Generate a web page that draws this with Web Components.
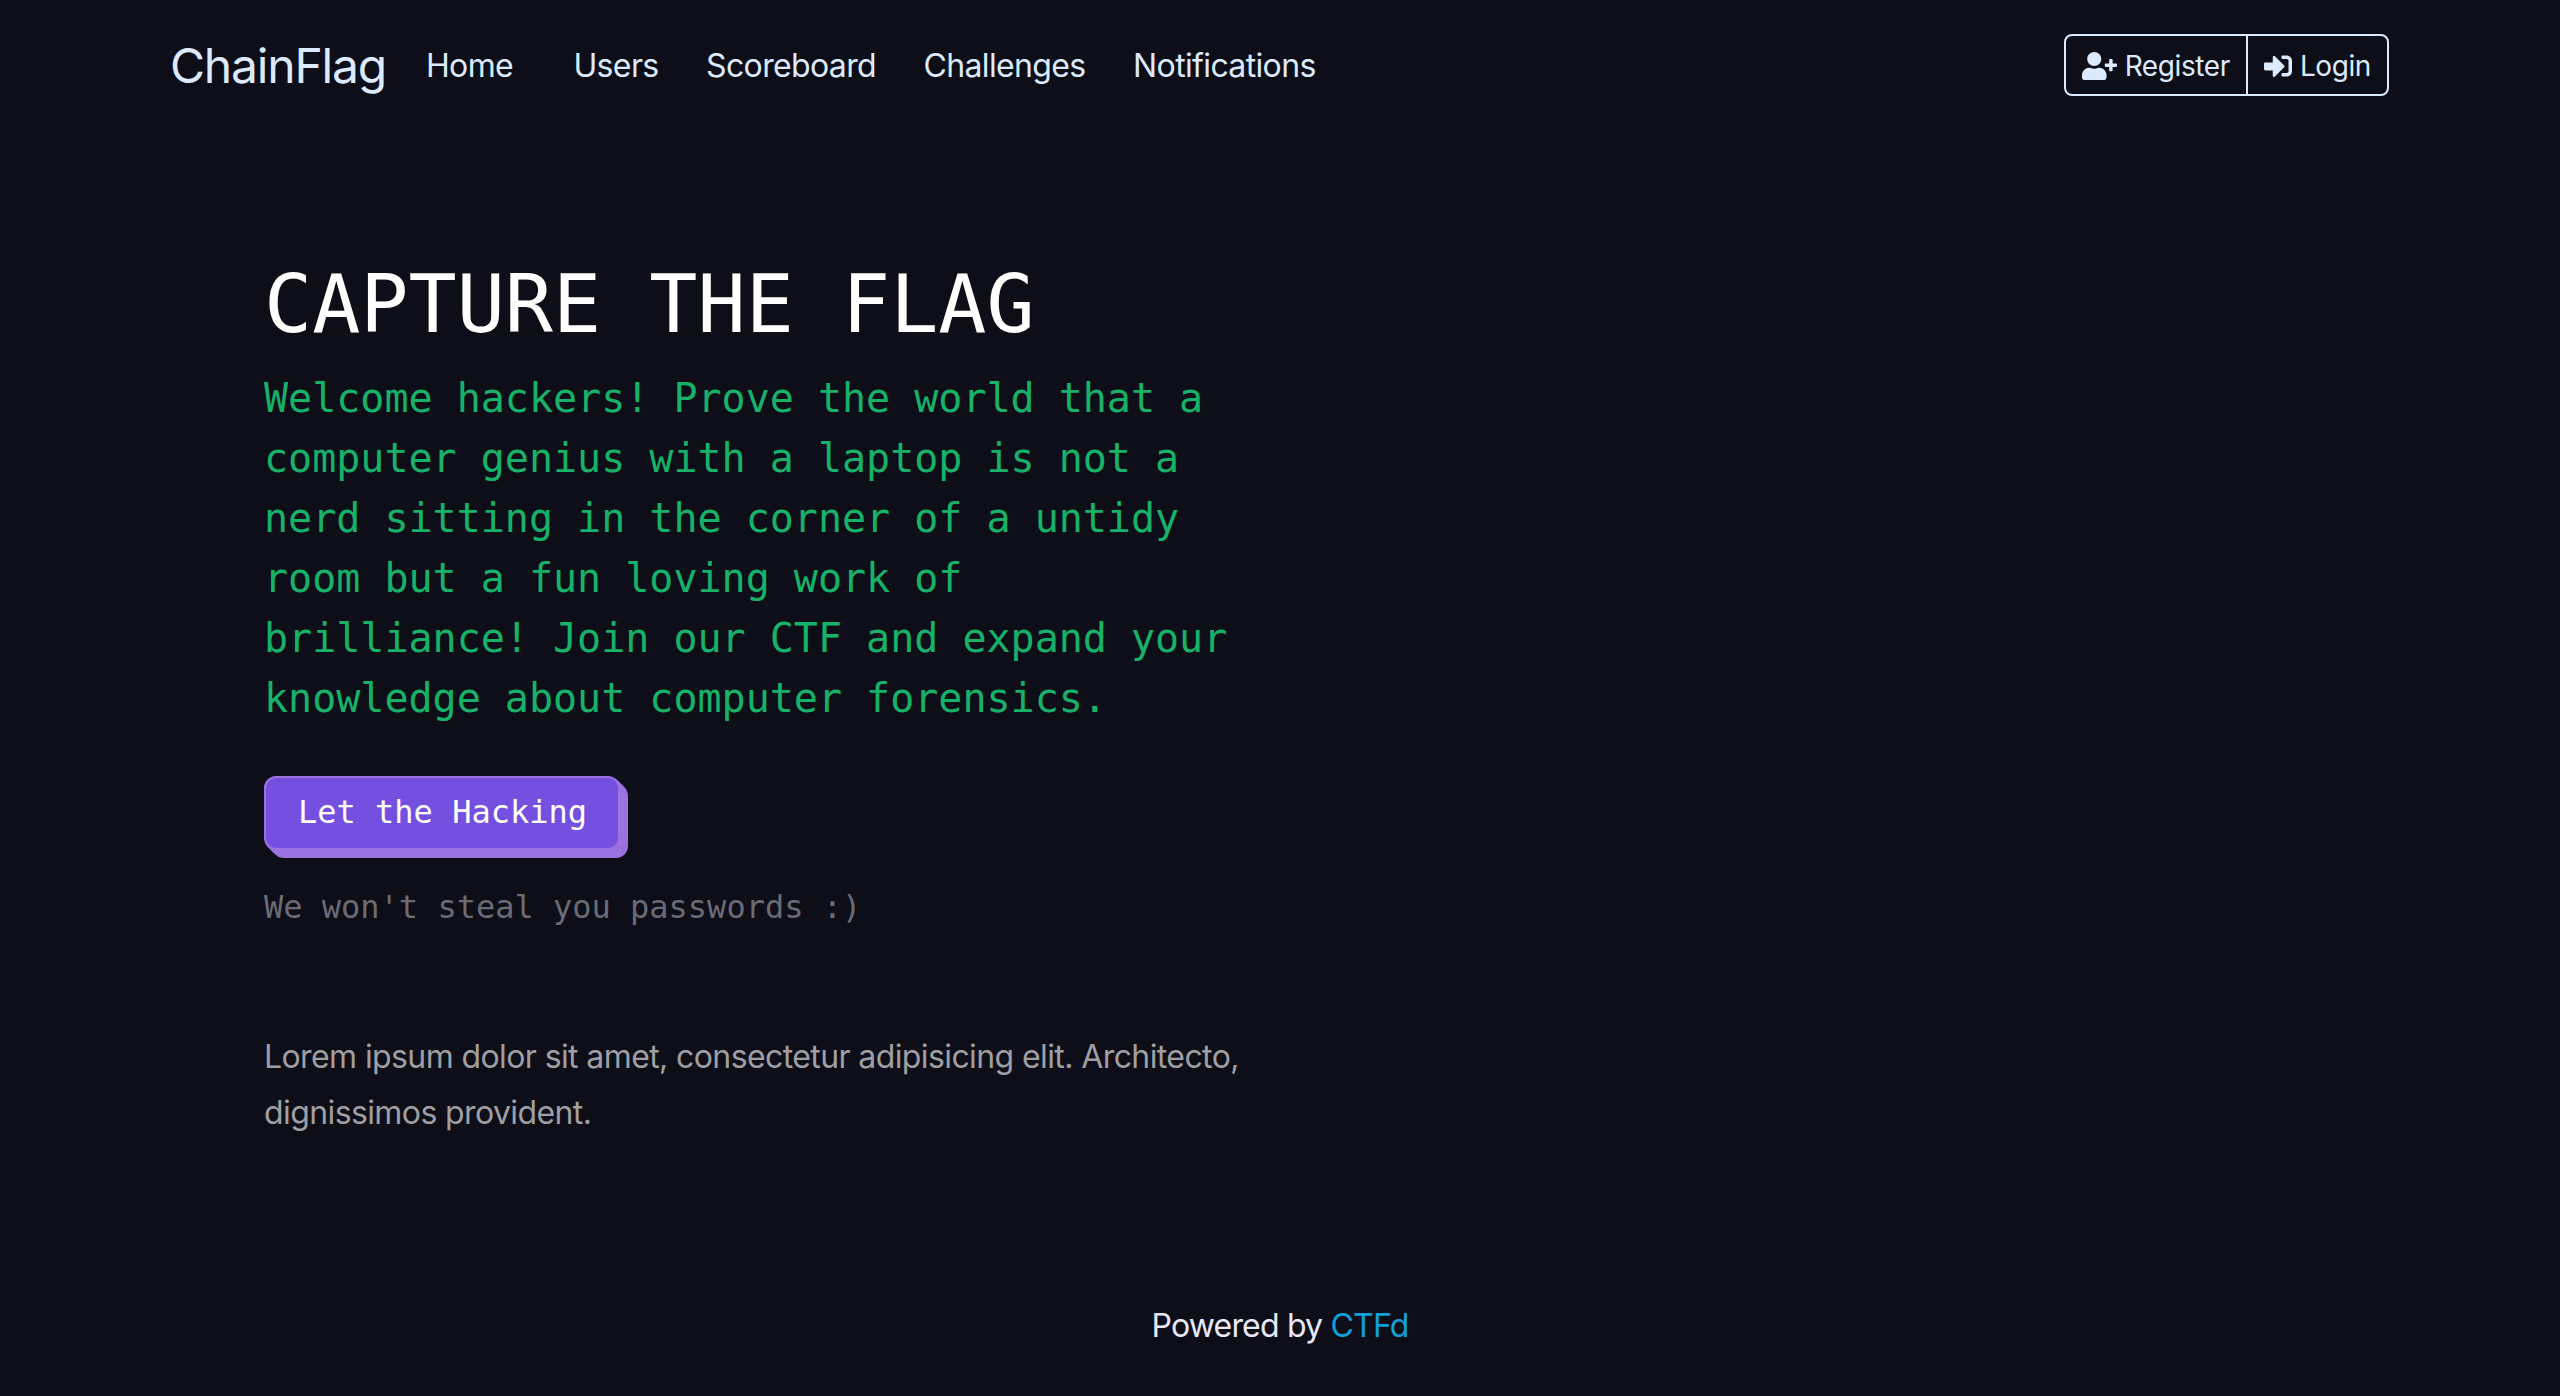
<!DOCTYPE html>
<html lang="en">
<head>
<meta charset="utf-8">
<title>ChainFlag</title>
<style>
    html, body { height: 100%; }
    body {
        margin: 0;
        background-color: #0d0e17;
        color: #dbeafe;
        font-family: Inter, "Liberation Sans", sans-serif;
        font-size: 32px;
        letter-spacing: -0.02em;
        display: flex;
        flex-direction: column;
    }
    hero-section { flex: 1; }
</style>
</head>
<body>
<site-nav brand="ChainFlag">
    <nav-link style="width:100px">Home</nav-link>
    <nav-link>Users</nav-link>
    <nav-link>Scoreboard</nav-link>
    <nav-link>Challenges</nav-link>
    <nav-link>Notifications</nav-link>
    <auth-buttons slot="right"></auth-buttons>
</site-nav>
<hero-section>
    <span slot="title">CAPTURE THE FLAG</span>
    <span slot="tagline">Welcome hackers! Prove the world that a computer genius with a laptop is not a nerd sitting in the corner of a untidy room but a fun loving work of brilliance! Join our CTF and expand your knowledge about computer forensics.</span>
    <hack-button slot="action">Let the Hacking</hack-button>
    <span slot="note">We won't steal you passwords :)</span>
    <span slot="text">Lorem ipsum dolor sit amet, consectetur adipisicing elit. Architecto, dignissimos provident.</span>
</hero-section>
<site-footer></site-footer>

<script>
class SiteNav extends HTMLElement {
    constructor() {
        super();
        this.attachShadow({ mode: 'open' });
    }

    connectedCallback() {
        this.shadowRoot.innerHTML = `
            <style>
                :host {
                    display: flex;
                    align-items: center;
                    height: 130px;
                    padding: 0 171px 0 170px;
                }
                .brand {
                    font-size: 48px;
                    letter-spacing: -0.025em;
                    margin-right: 40px;
                }
                .links {
                    display: flex;
                    flex: 1;
                }
            </style>
            <span class="brand">${this.getAttribute('brand')}</span>
            <div class="links"><slot></slot></div>
            <slot name="right"></slot>
        `;
    }
}

class NavLink extends HTMLElement {
    constructor() {
        super();
        this.attachShadow({ mode: 'open' });
        this.shadowRoot.innerHTML = `
            <style>
                :host {
                    display: block;
                    margin-right: 47.5px;
                    white-space: nowrap;
                }
            </style>
            <slot></slot>
        `;
    }
}

class AuthButtons extends HTMLElement {
    constructor() {
        super();
        this.attachShadow({ mode: 'open' });
        this.shadowRoot.innerHTML = `
            <style>
                :host {
                    display: flex;
                    height: 62px;
                    box-sizing: border-box;
                    border: 2px solid #dbeafe;
                    border-radius: 8px;
                    font-size: 28px;
                    letter-spacing: -0.4px;
                }
                a {
                    display: flex;
                    align-items: center;
                    gap: 8px;
                    padding: 2px 16px 0;
                }
                a:first-child { padding-left: 17px; }
                a + a { border-left: 2px solid #dbeafe; }
                svg { height: 28px; fill: currentColor; }
            </style>
            <a>
                <svg viewBox="0 0 640 512"><path d="M624 208h-64v-64c0-8.8-7.2-16-16-16h-32c-8.8 0-16 7.2-16 16v64h-64c-8.8 0-16 7.2-16 16v32c0 8.8 7.2 16 16 16h64v64c0 8.8 7.2 16 16 16h32c8.8 0 16-7.2 16-16v-64h64c8.8 0 16-7.2 16-16v-32c0-8.8-7.2-16-16-16zm-400 48c70.7 0 128-57.3 128-128S294.7 0 224 0 96 57.3 96 128s57.3 128 128 128zm89.6 32h-16.7c-22.2 10.2-46.9 16-72.9 16s-50.6-5.8-72.9-16h-16.7C60.2 288 0 348.2 0 422.4V464c0 26.5 21.5 48 48 48h352c26.5 0 48-21.5 48-48v-41.6c0-74.2-60.2-134.4-134.4-134.4z"/></svg>
                Register
            </a>
            <a>
                <svg viewBox="0 0 512 512"><path d="M416 448h-84c-6.6 0-12-5.4-12-12v-40c0-6.6 5.4-12 12-12h84c17.7 0 32-14.3 32-32V160c0-17.7-14.3-32-32-32h-84c-6.6 0-12-5.4-12-12V76c0-6.6 5.4-12 12-12h84c53 0 96 43 96 96v192c0 53-43 96-96 96zm-47-201L201 79c-15-15-41-4.5-41 17v96H24c-13.3 0-24 10.7-24 24v96c0 13.3 10.7 24 24 24h136v96c0 21.5 26 32 41 17l168-168c9.3-9.4 9.3-24.6 0-34z"/></svg>
                Login
            </a>
        `;
    }
}

class HeroSection extends HTMLElement {
    constructor() {
        super();
        this.attachShadow({ mode: 'open' });
        this.shadowRoot.innerHTML = `
            <style>
                :host {
                    display: block;
                    padding: 127px 0 0 264px;
                    font-family: "DejaVu Sans Mono", "Liberation Mono", monospace;
                    letter-spacing: 0;
                }
                h1 {
                    margin: 0;
                    width: 1000px;
                    font-size: 80px;
                    font-weight: 400;
                    line-height: 96px;
                    color: #fff;
                }
                p { margin: 0; }
                .tagline {
                    width: 970px;
                    margin-top: 15px;
                    font-size: 40px;
                    line-height: 60px;
                    color: #17b26a;
                }
                .action {
                    margin-top: 48px;
                    line-height: 0;
                }
                .note {
                    margin-top: 33px;
                    line-height: 48px;
                    color: #6b6b75;
                }
                .text {
                    width: 1000px;
                    margin-top: 98px;
                    font-family: Inter, "Liberation Sans", sans-serif;
                    letter-spacing: -0.6px;
                    line-height: 56px;
                    color: #9f9fa3;
                }
            </style>
            <h1><slot name="title"></slot></h1>
            <p class="tagline"><slot name="tagline"></slot></p>
            <div class="action"><slot name="action"></slot></div>
            <p class="note"><slot name="note"></slot></p>
            <p class="text"><slot name="text"></slot></p>
        `;
    }
}

class HackButton extends HTMLElement {
    constructor() {
        super();
        this.attachShadow({ mode: 'open' });
        this.shadowRoot.innerHTML = `
            <style>
                :host {
                    display: inline-block;
                    padding: 10px 31px 12px 32px;
                    background-color: #7450e0;
                    border: 2px solid #9b72e0;
                    border-radius: 12px;
                    box-shadow: 1px 1px 0 #9b72e0, 2px 2px 0 #9b72e0, 3px 3px 0 #9b72e0, 4px 4px 0 #9b72e0,
                        5px 5px 0 #9b72e0, 6px 6px 0 #9b72e0, 7px 7px 0 #9b72e0, 8px 8px 0 #9b72e0;
                    color: #fff;
                    line-height: 48px;
                }
            </style>
            <slot></slot>
        `;
    }
}

class SiteFooter extends HTMLElement {
    constructor() {
        super();
        this.attachShadow({ mode: 'open' });
        this.shadowRoot.innerHTML = `
            <style>
                :host {
                    display: block;
                    text-align: center;
                    padding-bottom: 46px;
                    line-height: 48px;
                    letter-spacing: -0.8px;
                    color: #e8e8fa;
                }
                a { color: #12a0dc; }
            </style>
            Powered by <a>CTFd</a>
        `;
    }
}

customElements.define('site-nav', SiteNav);
customElements.define('nav-link', NavLink);
customElements.define('auth-buttons', AuthButtons);
customElements.define('hero-section', HeroSection);
customElements.define('hack-button', HackButton);
customElements.define('site-footer', SiteFooter);
</script>
</body>
</html>
